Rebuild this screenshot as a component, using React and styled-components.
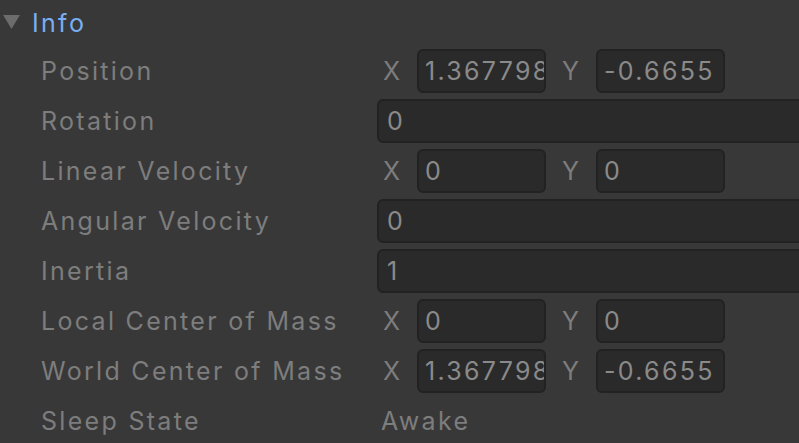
import styled, { createGlobalStyle } from "styled-components"

const GlobalStyle = createGlobalStyle`
    html, body {
        margin: 0;
        padding: 0;
        background: #383838;
        overflow: hidden;
    }
`

const rows = [
    { label: "Position", type: "vector", x: "1.367798", y: "-0.6655" },
    { label: "Rotation", type: "single", value: "0" },
    { label: "Linear Velocity", type: "vector", x: "0", y: "0" },
    { label: "Angular Velocity", type: "single", value: "0" },
    { label: "Inertia", type: "single", value: "1" },
    { label: "Local Center of Mass", type: "vector", x: "0", y: "0" },
    { label: "World Center of Mass", type: "vector", x: "1.367798", y: "-0.6655" },
    { label: "Sleep State", type: "text", value: "Awake" },
]

function App() {
    return (
        <Panel>
            <GlobalStyle />
            <Header>
                <Foldout viewBox="0 0 18 15">
                    <path d="M0 0 H18 L9 15 Z" fill="#6c6c6c" />
                </Foldout>
                <Title>Info</Title>
            </Header>
            {rows.map((row) => (
                <Row key={row.label}>
                    <Label>{row.label}</Label>
                    {row.type === "vector" && (
                        <Vector>
                            <Axis>
                                <AxisLabel>X</AxisLabel>
                                <Field>{row.x}</Field>
                            </Axis>
                            <Axis>
                                <AxisLabel>Y</AxisLabel>
                                <Field>{row.y}</Field>
                            </Axis>
                        </Vector>
                    )}
                    {row.type === "single" && <WideField>{row.value}</WideField>}
                    {row.type === "text" && <Value>{row.value}</Value>}
                </Row>
            ))}
        </Panel>
    )
}

export default App

const Panel = styled.div`
    width: 799px;
    height: 443px;
    background: #383838;
    font-family: Inter, "Noto Sans", sans-serif;
    font-size: 25px;
    letter-spacing: 2.3px;
    color: #7d7d7d;
    overflow: hidden;
`
const Header = styled.div`
    display: flex;
    align-items: center;
    height: 46px;
    padding-left: 3px;
    gap: 12px;
`
const Foldout = styled.svg`
    width: 17px;
    height: 14px;
    margin-top: -2px;
`
const Title = styled.div`
    color: #7aaef2;
`
const Row = styled.div`
    display: flex;
    align-items: center;
    height: 50px;
    padding-left: 41px;
`
const Label = styled.div`
    flex: 0 0 336px;
    white-space: nowrap;
`
const Vector = styled.div`
    display: flex;
    gap: 10px;
`
const Axis = styled.div`
    display: flex;
    align-items: center;
`
const AxisLabel = styled.div`
    width: 34px;
    padding-left: 6px;
`
const Field = styled.div`
    box-sizing: border-box;
    width: 129px;
    height: 44px;
    line-height: 40px;
    padding: 0 6px;
    background: #2a2a2a;
    border: 2px solid #222222;
    border-radius: 6px;
    color: #8a8a8a;
    white-space: nowrap;
    overflow: hidden;
`
const WideField = styled(Field)`
    flex: 1;
    width: auto;
    margin-right: -10px;
    padding-left: 8px;
`
const Value = styled.div`
    padding-left: 4px;
`
